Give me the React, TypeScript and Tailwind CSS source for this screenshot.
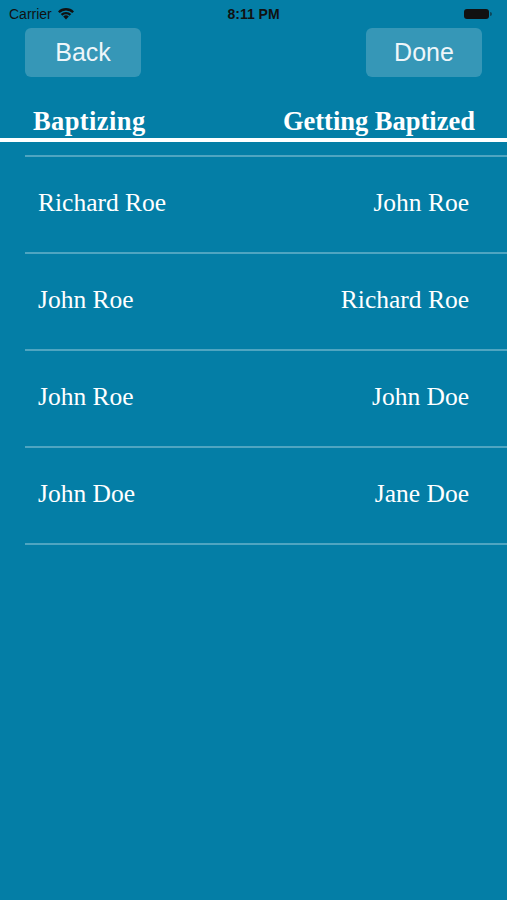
const pairs = [
  { baptizing: 'Richard Roe', baptized: 'John Roe' },
  { baptizing: 'John Roe', baptized: 'Richard Roe' },
  { baptizing: 'John Roe', baptized: 'John Doe' },
  { baptizing: 'John Doe', baptized: 'Jane Doe' },
];

const serif = { fontFamily: '"Liberation Serif", "Times New Roman", serif' };
const sans = { fontFamily: '"Liberation Sans", Arial, sans-serif' };

function StatusBar() {
  return (
    <div className="relative h-[28px] flex items-center px-[9px] text-[#111] text-[14px]" style={sans}>
      <div className="flex items-center gap-[5px]">
        <span>Carrier</span>
        <svg width="18" height="13" viewBox="0 0 18 13" className="-mt-[1px]">
          <path d="M9 12.5 L6.2 9.6 A4 4 0 0 1 11.8 9.6 Z" fill="#111" />
          <path d="M3.7 7.1 A7.5 7.5 0 0 1 14.3 7.1 L12.6 8.8 A5.1 5.1 0 0 0 5.4 8.8 Z" fill="#111" />
          <path d="M1 4.4 A11.3 11.3 0 0 1 17 4.4 L15.3 6.1 A8.9 8.9 0 0 0 2.7 6.1 Z" fill="#111" />
        </svg>
      </div>
      <span className="absolute left-1/2 -translate-x-1/2 font-bold">8:11 PM</span>
      <div className="ml-auto flex items-center mr-[6px]">
        <div className="w-[25px] h-[10px] rounded-[3px] bg-[#111]" />
        <div className="w-[2px] h-[4px] rounded-r-sm bg-[#111]/50 ml-[1px]" />
      </div>
    </div>
  );
}

export default function App() {
  return (
    <div className="w-[507px] h-[900px] bg-[#047ea6] overflow-hidden">
      <StatusBar />

      {/* Top buttons */}
      <div className="flex justify-between px-[25px]">
        <button className="w-[116px] h-[49px] rounded-[6px] bg-white/20 text-[#eef6fa] text-[25px]" style={sans}>
          Back
        </button>
        <button className="w-[116px] h-[49px] rounded-[6px] bg-white/20 text-[#eef6fa] text-[25px]" style={sans}>
          Done
        </button>
      </div>

      {/* Column headers */}
      <div className="flex justify-between items-end pl-[33px] pr-[32px] h-[61px] pb-[4px] text-white text-[26.5px] font-bold leading-none" style={serif}>
        <span className="tracking-[0.4px]">Baptizing</span>
        <span>Getting Baptized</span>
      </div>
      <div className="h-[4px] bg-white" />

      {/* List */}
      <div className="pl-[25px] pt-[13px]">
        <div className="h-[1.5px] bg-white/30" />
        {pairs.map((p, i) => (
          <div key={i}>
            <div className="h-[95.5px] flex items-center justify-between pl-[13px] pr-[38px] pb-[3px] text-[25.5px] text-white" style={serif}>
              <span>{p.baptizing}</span>
              <span>{p.baptized}</span>
            </div>
            <div className="h-[1.5px] bg-white/30" />
          </div>
        ))}
      </div>
    </div>
  );
}
